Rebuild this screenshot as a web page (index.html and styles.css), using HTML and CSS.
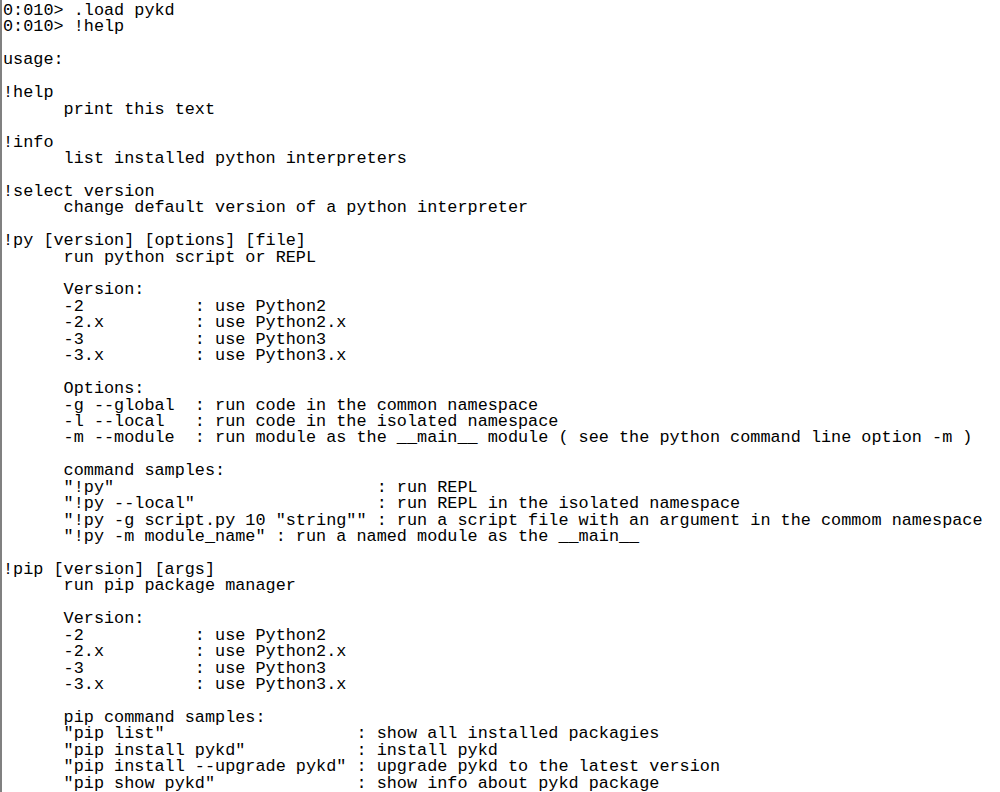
FILE: index.html
```html
<!DOCTYPE html>
<html lang="en">
<head>
<meta charset="utf-8">
<title>pykd help</title>
<link rel="stylesheet" href="styles.css">
</head>
<body>
<main class="console">
<pre class="output">0:010&gt; .load pykd
0:010&gt; !help

usage:

!help
      print this text

!info
      list installed python interpreters

!select version
      change default version of a python interpreter

!py [version] [options] [file]
      run python script or REPL

      Version:
      -2           : use Python2
      -2.x         : use Python2.x
      -3           : use Python3
      -3.x         : use Python3.x

      Options:
      -g --global  : run code in the common namespace
      -l --local   : run code in the isolated namespace
      -m --module  : run module as the __main__ module ( see the python command line option -m )

      command samples:
      "!py"                          : run REPL
      "!py --local"                  : run REPL in the isolated namespace
      "!py -g script.py 10 "string"" : run a script file with an argument in the commom namespace
      "!py -m module_name" : run a named module as the __main__

!pip [version] [args]
      run pip package manager

      Version:
      -2           : use Python2
      -2.x         : use Python2.x
      -3           : use Python3
      -3.x         : use Python3.x

      pip command samples:
      "pip list"                   : show all installed packagies
      "pip install pykd"           : install pykd
      "pip install --upgrade pykd" : upgrade pykd to the latest version
      "pip show pykd"              : show info about pykd package</pre>
</main>
</body>
</html>
```

FILE: styles.css
```css
html, body {
  margin: 0;
  padding: 0;
  background: #ffffff;
  height: 100%;
}

.console {
  box-sizing: border-box;
  min-height: 100%;
  border-left: 2px solid #808080;
  padding: 3px 0 0 1px;
  overflow: hidden;
}

.output {
  margin: 0;
  font-family: "Liberation Mono", "Courier New", monospace;
  font-size: 16.83px;
  line-height: 16.43px;
  color: #000000;
  white-space: pre;
}
```
